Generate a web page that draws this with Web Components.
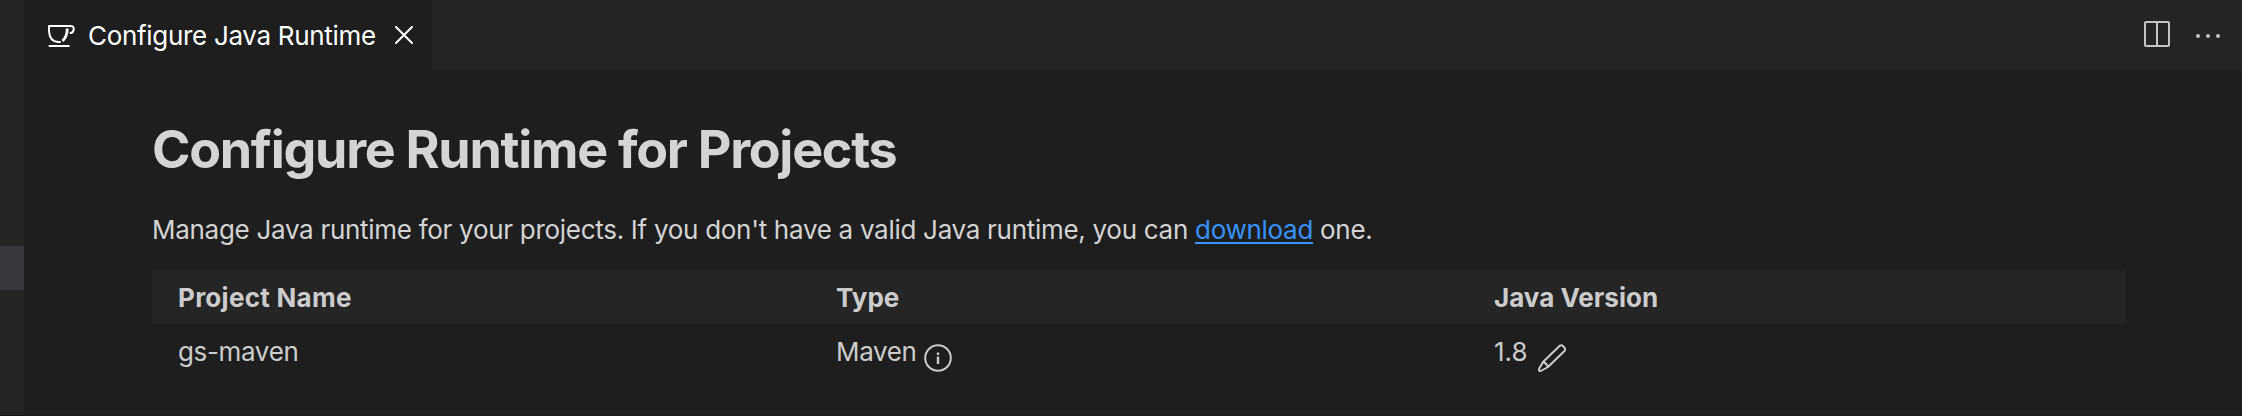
<!DOCTYPE html>
<html lang="en">
<head>
<meta charset="utf-8">
<title>Configure Java Runtime</title>
<style>
html,body{margin:0;height:100%;overflow:hidden;background:#1e1e1e}
body{font-family:Inter,"Liberation Sans",sans-serif;font-size:26px;color:#cfcfcf}
</style>
</head>
<body>
<runtime-app></runtime-app>
<script>
function define(name, html) {
  const t = document.createElement('template');
  t.innerHTML = html;
  customElements.define(name, class extends HTMLElement {
    constructor() {
      super();
      this.attachShadow({mode: 'open'}).append(t.content.cloneNode(true));
    }
  });
}
define('cup-icon', `<style>:host{display:block;width:32px;height:32px}svg{display:block}</style>
<svg width="32" height="32" viewBox="0 0 32 32" fill="none" stroke="#fff" stroke-width="2" stroke-linecap="round" stroke-linejoin="round"><path d="M5 7H26.500Q30.200 7 29.700 10.500Q29.200 13.800 26.500 14M5 7V12Q5.500 22.500 14 23H16"/><path d="M23.200 9.500Q23.500 17 18.500 22" stroke-width="2.800" stroke-linecap="butt"/><path d="M5.500 27H24.800"/></svg>`);
define('close-icon', `<style>:host{display:block;width:18px;height:18px}svg{display:block}</style>
<svg width="18" height="18" viewBox="0 0 18 18" stroke="#fff" stroke-width="2" stroke-linecap="round"><path d="M1 1L17 17M17 1L1 17"/></svg>`);
define('split-icon', `<style>:host{display:block;width:26px;height:26px}svg{display:block}</style>
<svg width="26" height="26" fill="none" stroke="#c5c5c5" stroke-width="2"><rect x="1" y="1" width="24" height="24" rx="1"/><path d="M13 1V25"/></svg>`);
define('more-icon', `<style>:host{display:block;width:24px;height:4px}svg{display:block}</style>
<svg width="24" height="4" fill="#c5c5c5"><circle cx="2" cy="2" r="2"/><circle cx="12" cy="2" r="2"/><circle cx="22" cy="2" r="2"/></svg>`);
define('info-icon', `<style>:host{display:block;width:28px;height:28px}svg{display:block}</style>
<svg width="28" height="28" fill="none" stroke="#cccccc"><circle cx="14" cy="14" r="12.800" stroke-width="2"/><path d="M14 12.500V20M14 8.500V11" stroke-width="2.400"/></svg>`);
define('edit-icon', `<style>:host{display:block;width:28px;height:28px}svg{display:block}</style>
<svg width="28" height="28" viewBox="0 0 28 28" fill="none" stroke="#cccccc" stroke-width="2" stroke-linejoin="round"><path d="M1 25L5 18L21.800 1.700Q23.500 .6 25 2L26.600 3.800Q27.900 5.400 26.500 7L10 23L2.800 27Q.5 27.300 1 25ZM5 18Q8.500 19 10 23"/></svg>`);
define('side-strip', `<style>:host{display:flex;flex-direction:column;background:#252526;padding-top:246px;box-sizing:border-box}div{height:44px;background:#37373d}</style><div></div>`);
define('editor-tab', `<style>:host{display:flex;align-items:center;box-sizing:border-box;width:408px;height:70px;background:#1e1e1e;padding-left:20px;color:#fff}span{white-space:nowrap;width:287px;margin-left:12px;letter-spacing:-.31px}close-icon{margin-left:20px}</style><cup-icon></cup-icon><span><slot></slot></span><close-icon></close-icon>`);
define('tab-bar', `<style>:host{display:flex;background:#252526;height:70px}div{display:flex;margin-left:auto;align-items:center;padding-right:22px;gap:26px}more-icon{margin-top:1px}split-icon{margin-top:-2px}</style><slot></slot><div><split-icon></split-icon><more-icon></more-icon></div>`);
define('page-heading', `<style>:host{display:block}h1{font-size:52px;line-height:64px;margin:0;font-weight:700;color:#d4d4d4;letter-spacing:-1.29px;white-space:nowrap}</style><h1><slot></slot></h1>`);
define('page-intro', `<style>:host{display:block;line-height:40px;color:#d4d4d4;white-space:nowrap;letter-spacing:-.29px}::slotted(a){color:#3794ff;text-decoration:underline;text-decoration-thickness:2px;text-underline-offset:3px;text-decoration-skip-ink:none}</style><slot></slot>`);
define('table-row', `<style>:host{display:grid;grid-template-columns:repeat(3,1fr);height:54px;line-height:54px;letter-spacing:-.35px}:host([head]){background:#252526;font-weight:700;letter-spacing:0}::slotted(*){padding:2px 0 0 26px;height:52px;line-height:52px;display:flex;align-items:center;gap:8px;white-space:nowrap}</style><slot></slot>`);
define('runtime-table', `<style>:host{display:block;color:#cccccc}info-icon,edit-icon{margin-top:11px}info-icon{margin-left:-1px}edit-icon{margin-left:2px}.name{letter-spacing:.28px}.version{letter-spacing:0}</style>
<table-row head><span class="name">Project Name</span><span>Type</span><span>Java Version</span></table-row>
<table-row><span>gs-maven</span><span>Maven <info-icon></info-icon></span><span class="version">1.8 <edit-icon></edit-icon></span></table-row>`);
define('runtime-app', `<style>:host{display:grid;grid-template-columns:24px 1fr;height:416px;box-sizing:border-box;border-bottom:1px solid #1d171c}main{display:block;padding:48px 116px 0 128px}page-intro{margin-top:28px}runtime-table{margin-top:20px}</style>
<side-strip></side-strip><section><tab-bar><editor-tab>Configure Java Runtime</editor-tab></tab-bar>
<main><page-heading>Configure Runtime for Projects</page-heading><page-intro>Manage Java runtime for your projects. If you don't have a valid Java runtime, you can <a>download</a> one.</page-intro><runtime-table></runtime-table></main></section>`);
</script>
</body>
</html>
